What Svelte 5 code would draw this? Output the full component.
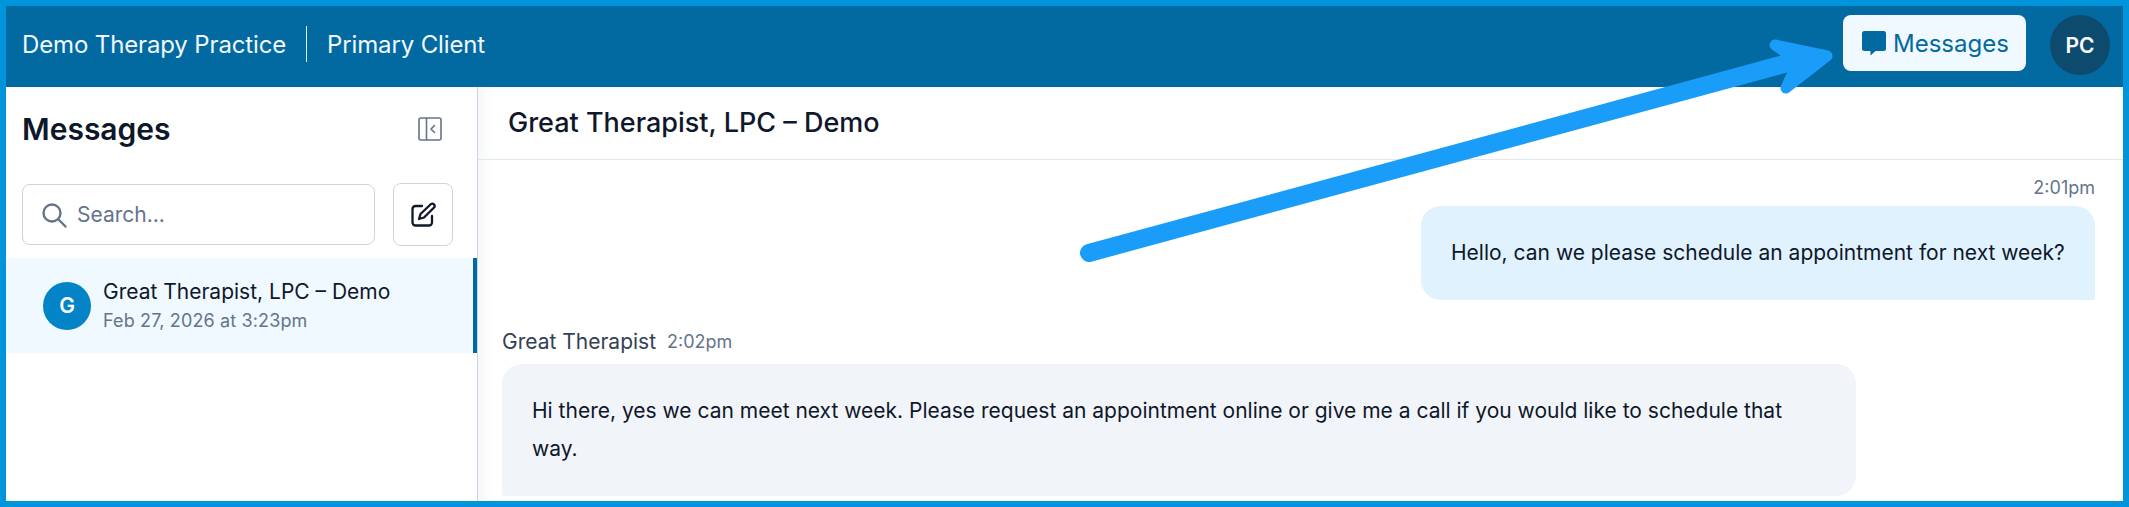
<script lang="ts">
  const practice = "Demo Therapy Practice";
  const client = "Primary Client";
  const contact = "Great Therapist, LPC – Demo";
</script>

<div class="frame">
  <header class="topbar">
    <div class="brand">
      <span>{practice}</span>
      <span class="divider"></span>
      <span>{client}</span>
    </div>
    <div class="top-actions">
      <button class="messages-btn">
        <svg width="24" height="25" viewBox="0 0 24 25" aria-hidden="true">
          <path d="M2.500 0h19A2.500 2.500 0 0 1 24 2.500v15a2.500 2.500 0 0 1-2.500 2.500H13.500L8.500 24.500V20h-6A2.500 2.500 0 0 1 0 17.500v-15A2.500 2.500 0 0 1 2.500 0z" fill="currentColor" />
        </svg>
        Messages
      </button>
      <div class="me">PC</div>
    </div>
  </header>

  <div class="body">
    <aside class="sidebar">
      <div class="side-head">
        <h2>Messages</h2>
        <svg class="collapse" width="24" height="24" viewBox="0 0 24 24" fill="none" stroke="#64748b" stroke-width="1.6" aria-hidden="true">
          <rect x="1" y="1" width="22" height="22" rx="2" />
          <path d="M8.500 1v22" />
          <path d="M16.500 8.500 13 12l3.500 3.500" stroke-linecap="round" stroke-linejoin="round" />
        </svg>
      </div>
      <div class="search-row">
        <div class="search">
          <svg width="26" height="26" viewBox="0 0 26 26" fill="none" stroke="#64748b" stroke-width="2.400" stroke-linecap="round" aria-hidden="true">
            <circle cx="11" cy="11" r="8.500" />
            <path d="M17.500 17.500l7 7" />
          </svg>
          <span>Search...</span>
        </div>
        <button class="compose" aria-label="New message">
          <svg width="25" height="25" viewBox="0 0 25 25" fill="none" stroke="#0f172a" stroke-width="2.300" stroke-linecap="round" stroke-linejoin="round">
            <path d="M11 4H4.500A3 3 0 0 0 1.500 7v13.500a3 3 0 0 0 3 3H18a3 3 0 0 0 3-3V14" />
            <path d="M20 2a2.400 2.400 0 0 1 3.300 3.300L13 15.500 8 17l1.500-5z" />
          </svg>
        </button>
      </div>
      <div class="thread">
        <div class="thread-avatar">G</div>
        <div class="thread-text">
          <div class="thread-name">{contact}</div>
          <div class="thread-date">Feb 27, 2026 at 3:23pm</div>
        </div>
      </div>
    </aside>

    <main class="chat">
      <div class="chat-head">{contact}</div>
      <div class="log">
        <div class="time-right">2:01pm</div>
        <div class="bubble mine">Hello, can we please schedule an appointment for next week?</div>
        <div class="meta">
          <span class="sender">Great Therapist</span>
          <span class="time">2:02pm</span>
        </div>
        <div class="bubble theirs">Hi there, yes we can meet next week. Please request an appointment online or give me a call if you would like to schedule that way.</div>
      </div>
    </main>
  </div>

  <!-- annotation arrow drawn over the screenshot -->
  <svg class="arrow" width="2129" height="507" viewBox="0 0 2129 507" aria-hidden="true">
    <path d="M1089 253 1810 57" fill="none" stroke="#1a9cf9" stroke-width="18" stroke-linecap="round" />
    <polygon points="1775,45 1827,56 1786,88 1796,66 1794,58" fill="#1a9cf9" stroke="#1a9cf9" stroke-width="11" stroke-linejoin="round" />
  </svg>
</div>

<style>
  :global(body) {
    margin: 0;
    background: #0095da;
  }

  .frame {
    box-sizing: border-box;
    width: 2129px;
    height: 507px;
    border: 6px solid #0095da;
    display: flex;
    flex-direction: column;
    overflow: hidden;
    background: #fff;
    font-family: Inter, "Liberation Sans", sans-serif;
    color: #0f172a;
  }

  .topbar {
    flex: 0 0 81px;
    background: #0369a1;
    display: flex;
    align-items: flex-start;
    justify-content: space-between;
    padding: 9px 13px 0 16px;
    box-sizing: border-box;
  }

  .brand {
    display: flex;
    align-items: center;
    height: 58px;
    gap: 20px;
    color: #f0f9ff;
    font-size: 24px;
    letter-spacing: -0.14px;
  }

  .divider {
    width: 1px;
    height: 36px;
    background: #e0f2fe;
  }

  .top-actions {
    display: flex;
    gap: 24px;
  }

  .messages-btn {
    display: flex;
    align-items: center;
    gap: 7px;
    height: 56px;
    width: 183px;
    padding: 0 0 0 19px;
    border: 0;
    border-radius: 8px;
    background: #f0f9ff;
    color: #0369a1;
    font: 400 24px Inter, sans-serif;
  }

  .me {
    width: 60px;
    height: 60px;
    border-radius: 50%;
    background: #0c4a6e;
    color: #fff;
    display: flex;
    align-items: center;
    justify-content: center;
    font-size: 21px;
    font-weight: 600;
  }

  .body {
    flex: 1;
    display: flex;
    min-height: 0;
  }

  .sidebar {
    box-sizing: border-box;
    flex: 0 0 472px;
    border-right: 1px solid #cbd5e1;
    background: #fff;
  }

  .side-head {
    display: flex;
    align-items: center;
    justify-content: space-between;
    height: 62px;
    padding: 0 35px 0 16px;
    margin-top: 11px;
  }

  h2 {
    margin: 0;
    font-size: 30px;
    font-weight: 600;
  }

  .collapse {
    flex: none;
  }

  .search-row {
    display: flex;
    gap: 18px;
    align-items: center;
    padding: 0 24px 0 16px;
    margin-top: 23px;
  }

  .search {
    box-sizing: border-box;
    width: 353px;
    height: 61px;
    border: 1px solid #cbd5e1;
    border-radius: 8px;
    display: flex;
    align-items: center;
    gap: 10px;
    padding-left: 18px;
    color: #64748b;
    font-size: 21px;
  }

  .compose {
    box-sizing: border-box;
    width: 60px;
    height: 63px;
    border: 1px solid #cbd5e1;
    border-radius: 8px;
    background: #fff;
    display: flex;
    align-items: center;
    justify-content: center;
    padding: 0;
  }

  .thread {
    box-sizing: border-box;
    height: 95px;
    margin-top: 12px;
    background: #f0f9ff;
    border-right: 4px solid #0369a1;
    display: flex;
    align-items: center;
    gap: 12px;
    padding-left: 37px;
  }

  .thread-avatar {
    width: 48px;
    height: 48px;
    border-radius: 50%;
    background: #0284c7;
    color: #fff;
    font-size: 21px;
    font-weight: 600;
    display: flex;
    align-items: center;
    justify-content: center;
  }

  .thread-name {
    font-size: 21px;
    line-height: 30px;
  }

  .thread-date {
    font-size: 18px;
    line-height: 28px;
    letter-spacing: 0.14px;
    color: #64748b;
  }

  .chat {
    flex: 1;
    min-width: 0;
    display: flex;
    flex-direction: column;
    background: linear-gradient(to right, #f6f7f9, #fff 14px);
  }

  .chat-head {
    height: 73px;
    box-sizing: border-box;
    border-bottom: 1px solid #e2e8f0;
    padding: 0 0 2px 30px;
    display: flex;
    align-items: center;
    font-size: 27px;
    font-weight: 500;
  }

  .log {
    padding: 14px 28px 0 24px;
    flex: 1;
  }

  .time-right {
    text-align: right;
    font-size: 18px;
    line-height: 28px;
    color: #64748b;
  }

  .bubble {
    box-sizing: border-box;
    padding: 28px 30px;
    font-size: 21px;
    line-height: 38px;
  }

  .mine {
    width: 674px;
    margin: 4px 0 0 auto;
    background: #e0f2fe;
    border-radius: 20px 20px 2px 20px;
  }

  .meta {
    display: flex;
    align-items: center;
    gap: 11px;
    margin-top: 26px;
    height: 30px;
  }

  .sender {
    font-size: 21px;
    color: #334155;
  }

  .time {
    font-size: 18px;
    color: #64748b;
  }

  .theirs {
    width: 1354px;
    margin-top: 8px;
    background: #f1f5f9;
    border-radius: 20px 20px 20px 2px;
  }

  .arrow {
    position: absolute;
    left: 0;
    top: 0;
    pointer-events: none;
  }
</style>
